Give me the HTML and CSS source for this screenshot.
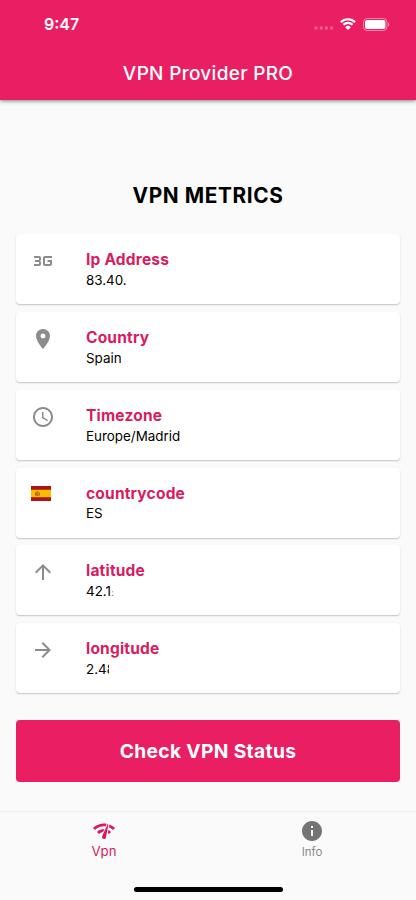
FILE: index.html
```
<!DOCTYPE html>
<html lang="en">
<head>
<meta charset="utf-8">
<title>VPN Provider PRO</title>
<link rel="stylesheet" href="styles.css">
</head>
<body>
<div class="screen">
  <header class="appbar">
    <div class="status">
      <span class="time">9:47</span>
      <div class="indicators">
        <svg class="cell" width="20" height="4" viewBox="0 0 20 4"><circle cx="2" cy="2" r="1.7"/><circle cx="7.2" cy="2" r="1.7"/><circle cx="12.4" cy="2" r="1.7"/><circle cx="17.6" cy="2" r="1.7"/></svg>
        <svg class="wifi" width="16" height="12" viewBox="0 0 16 12"><path d="M.9 4.1a10.3 10.3 0 0 1 14.2 0M3.4 6.8a6.7 6.7 0 0 1 9.2 0"/><path class="dot" d="M8 11.9 5.2 9.2a4 4 0 0 1 5.6 0z"/></svg>
        <svg class="battery" width="27" height="13" viewBox="0 0 27 13"><rect class="shell" x=".5" y=".5" width="23.5" height="12" rx="3.6"/><rect class="charge" x="2" y="2" width="20.5" height="9" rx="2"/><path class="tip" d="M25 4.5c1.7.5 1.7 3.5 0 4z"/></svg>
      </div>
    </div>
    <h1 class="title">VPN Provider PRO</h1>
  </header>

  <main class="content">
    <h2 class="heading">VPN METRICS</h2>
    <div class="cards">
      <section class="card">
        <svg class="icon" viewBox="0 0 24 24"><path d="M3 7v2h5v2H4v2h4v2H3v2h5c1.1 0 2-.9 2-2v-1.5c0-.83-.67-1.5-1.5-1.5.83 0 1.5-.67 1.5-1.5V9c0-1.1-.9-2-2-2H3zm18 4v4c0 1.1-.9 2-2 2h-5c-1.1 0-2-.9-2-2V9c0-1.1.9-2 2-2h7v2h-7v6h5v-2h-2.5v-2H21z"/></svg>
        <div class="text"><h3 class="name">Ip Address</h3><p class="value">83.40.</p></div>
      </section>
      <section class="card">
        <svg class="icon" viewBox="0 0 24 24"><path d="M12 2C8.13 2 5 5.13 5 9c0 5.25 7 13 7 13s7-7.75 7-13c0-3.87-3.13-7-7-7zm0 9.5a2.5 2.5 0 0 1 0-5 2.5 2.5 0 0 1 0 5z"/></svg>
        <div class="text"><h3 class="name">Country</h3><p class="value">Spain</p></div>
      </section>
      <section class="card">
        <svg class="icon" viewBox="0 0 24 24"><path d="M11.99 2C6.47 2 2 6.48 2 12s4.47 10 9.99 10C17.52 22 22 17.52 22 12S17.52 2 11.99 2zM12 20c-4.42 0-8-3.58-8-8s3.58-8 8-8 8 3.58 8 8-3.58 8-8 8zm.5-13H11v6l5.25 3.15.75-1.23-4.5-2.67z"/></svg>
        <div class="text"><h3 class="name">Timezone</h3><p class="value">Europe/Madrid</p></div>
      </section>
      <section class="card">
        <svg class="flag" viewBox="0 0 20 15"><path fill="#ad1519" d="M0 0h20v15H0z"/><path fill="#fabd00" d="M0 3.8h20v7.4H0z"/><path fill="#ad5a22" d="M4 6.5h.8v3.3H4zM8 6.5h.8v3.3H8zM5.2 6.2h2.4v2.5a1.2 1.2 0 0 1-2.4 0zM5.6 5.2h1.8v.8H5.6z"/><path fill="#d9a37c" d="M6.5 7h1v1h-1z"/></svg>
        <div class="text"><h3 class="name">countrycode</h3><p class="value">ES</p></div>
      </section>
      <section class="card">
        <svg class="icon" viewBox="0 0 24 24"><path d="M4 12l1.41 1.41L11 7.83V20h2V7.83l5.58 5.59L20 12l-8-8-8 8z"/></svg>
        <div class="text"><h3 class="name">latitude</h3><p class="value">42.1<span class="faint">:</span></p></div>
      </section>
      <section class="card">
        <svg class="icon" viewBox="0 0 24 24"><path d="M12 4l-1.41 1.41L16.17 11H4v2h12.17l-5.58 5.59L12 20l8-8z"/></svg>
        <div class="text"><h3 class="name">longitude</h3><p class="value">2.4<span class="cut">8</span></p></div>
      </section>
    </div>
    <button class="check">Check VPN Status</button>
  </main>

  <nav class="tabs">
    <a class="tab active">
      <svg class="tab-icon" viewBox="0 0 24 24"><path d="M15.9 5c-.17 0-.32.09-.41.23l-.07.15-5.18 11.65c-.16.29-.26.61-.26.96 0 1.11.9 2.01 2.01 2.01.96 0 1.77-.68 1.96-1.59l.01-.03L16.4 5.5c0-.28-.22-.5-.5-.5zM1 9l2 2c2.88-2.88 6.79-4.08 10.53-3.62l1.19-2.68C9.89 3.84 4.74 5.27 1 9zm20 2l2-2c-1.64-1.64-3.55-2.82-5.59-3.57l-.53 2.82c1.5.62 2.9 1.53 4.12 2.75zm-4 4l2-2c-.8-.8-1.7-1.42-2.66-1.89l-.55 2.92c.42.27.83.59 1.21.97zM5 13l2 2c1.13-1.13 2.56-1.79 4.03-2l1.28-2.88c-2.63-.08-5.3.87-7.31 2.88z"/></svg>
      <span class="tab-label">Vpn</span>
    </a>
    <a class="tab">
      <svg class="tab-icon" viewBox="0 0 24 24"><path d="M12 2C6.48 2 2 6.48 2 12s4.48 10 10 10 10-4.48 10-10S17.52 2 12 2zm1 15h-2v-6h2v6zm0-8h-2V7h2v2z"/></svg>
      <span class="tab-label">Info</span>
    </a>
    <div class="home"></div>
  </nav>
</div>
</body>
</html>
```
FILE: styles.css
```
* { box-sizing: border-box; }

body {
  margin: 0;
  background: #fafafa;
  font-family: Inter, "Liberation Sans", sans-serif;
  color: #000;
}

h1, h2, h3, p { margin: 0; }
svg { display: block; flex: none; }

.screen {
  width: 416px;
  height: 900px;
  display: flex;
  flex-direction: column;
  overflow: hidden;
}

.appbar {
  height: 100px;
  flex: none;
  background: #e91e63;
  color: #fff;
  box-shadow: 0 1px 4px rgba(0, 0, 0, .5);
}

.status {
  height: 46px;
  padding: 2px 27px 0 44px;
  display: flex;
  align-items: center;
  justify-content: space-between;
}

.time { font-size: 16px; font-weight: 600; line-height: 20px; }

.indicators { display: flex; align-items: center; }
.cell { margin: 8px 6px 0 0; fill: rgba(255, 255, 255, .3); }
.wifi { margin-right: 7px; fill: none; stroke: #fff; stroke-width: 2.2; }
.wifi .dot { fill: #fff; stroke: none; }
.battery { margin-right: -1px; }
.shell { fill: none; stroke: rgba(255, 255, 255, .45); }
.charge { fill: #fff; }
.tip { fill: rgba(255, 255, 255, .5); }

.title {
  padding-top: 1px;
  text-align: center;
  font-size: 19px;
  font-weight: 500;
  letter-spacing: .3px;
  line-height: 54px;
}

.content {
  flex: 1;
  padding: 82px 16px 0;
}

.heading {
  text-align: center;
  font-size: 20.8px;
  font-weight: 700;
  letter-spacing: .6px;
  line-height: 27px;
}

.cards {
  margin-top: 25.4px;
  display: flex;
  flex-direction: column;
  gap: 7.75px;
}

.card {
  height: 70px;
  padding: 15px;
  display: flex;
  background: #fff;
  border-radius: 4px;
  box-shadow: 0 1px 1.5px rgba(0, 0, 0, .22);
}

.icon { width: 24px; height: 24px; margin-right: 31px; fill: #8c8c8c; }
.flag { width: 20px; height: 15px; margin: 3px 35px 0 0; }

.name {
  padding-top: 1px;
  color: #d81b60;
  font-size: 15.5px;
  font-weight: 700;
  line-height: 20px;
  letter-spacing: .2px;
}

.value { margin-top: -.3px; font-size: 13.4px; line-height: 20px; }

.faint { margin-left: .3px; font-size: 9px; color: #777; }

/* Trailing digit hidden behind the redaction */
.cut {
  display: inline-block;
  width: 2.5px;
  height: 20px;
  overflow: hidden;
  vertical-align: top;
}

.check {
  display: block;
  width: 100%;
  height: 62px;
  margin-top: 26.9px;
  padding: 1px 0 0;
  border: 0;
  border-radius: 4px;
  background: #e91e63;
  color: #fff;
  font: 700 19.2px/61px Inter, "Liberation Sans", sans-serif;
  letter-spacing: .35px;
}

.tabs {
  height: 89px;
  flex: none;
  border-top: 1px solid #efefef;
  padding-top: 7px;
  display: grid;
  grid-template-columns: 1fr 1fr;
  grid-template-rows: 1fr auto;
}

.tab {
  display: flex;
  flex-direction: column;
  align-items: center;
  color: #757575;
  font-size: 11.5px;
}
.tab.active { color: #d81b60; font-size: 13.2px; }
.tab-icon { width: 24px; height: 24px; fill: currentColor; }
.tab-label { line-height: 16px; }
.tab:not(.active) .tab-label { padding-top: 1px; color: #8a8a8a; }

.home {
  grid-column: 1 / 3;
  justify-self: center;
  width: 149px;
  height: 5px;
  margin-bottom: 8px;
  border-radius: 3px;
  background: #000;
}
```
